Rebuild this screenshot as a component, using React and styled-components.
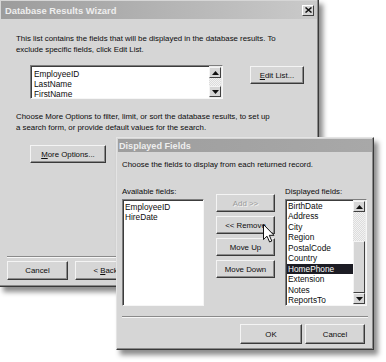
import React from 'react';
import styled, { createGlobalStyle } from 'styled-components';

const GlobalStyle = createGlobalStyle`
  html, body {
    margin: 0;
    padding: 0;
    background: #ffffff;
  }
  body {
    font-family: "Liberation Sans", Arial, sans-serif;
    font-size: 7.85px;
    color: #0c0c0c;
  }
`;

const Desktop = styled.div`
  position: relative;
  width: 386px;
  height: 362px;
  overflow: hidden;
  background: #fff;
`;

// windows sit on a free canvas, so they are placed by coordinates
const Window = styled.div`
  position: absolute;
  left: ${p => p.left}px;
  top: ${p => p.top}px;
  width: ${p => p.width}px;
  height: ${p => p.height}px;
  box-sizing: border-box;
  display: flex;
  flex-direction: column;
  background: #d6d6d6;
  border: 1px solid;
  border-color: #e4e4e4 #3a3a3a #3a3a3a #e4e4e4;
  box-shadow: inset -1px -1px #8a8a8a, 4px 5px 5px rgba(0, 0, 0, 0.45);
`;

const TitleBar = styled.div`
  height: ${p => p.h}px;
  flex: none;
  display: flex;
  align-items: center;
  justify-content: space-between;
  padding: 0 3px 0 ${p => p.pad}px;
  margin: 1px 1px 0 1px;
  background: linear-gradient(to right, ${p => p.from}, ${p => p.to});
  color: #eeeeee;
  font-weight: bold;
  font-size: ${p => p.fs}px;
`;

const CloseBox = styled.div`
  width: 12px;
  height: 11px;
  box-sizing: border-box;
  background: #d6d6d6;
  border: 1px solid;
  border-color: #fff #404040 #404040 #fff;
  display: flex;
  align-items: center;
  justify-content: center;
`;

const Body = styled.div`
  flex: 1;
  display: flex;
  flex-direction: column;
  padding: ${p => p.pad};
`;

const Para = styled.p`
  margin: ${p => p.m || 0};
  line-height: 11px;
  white-space: nowrap;
`;

const Row = styled.div`
  display: flex;
  align-items: flex-start;
  gap: ${p => p.gap || 0}px;
  margin: ${p => p.m || 0};
`;

const Button = styled.button`
  width: ${p => p.w}px;
  height: ${p => p.h || 18}px;
  flex: none;
  box-sizing: border-box;
  padding: 0;
  font-family: inherit;
  font-size: 7.85px;
  color: ${p => (p.disabled ? '#9a9a9a' : '#0c0c0c')};
  text-shadow: ${p => (p.disabled ? '1px 1px #f4f4f4' : 'none')};
  background: #d6d6d6;
  border: 1px solid;
  border-color: #f4f4f4 #3a3a3a #3a3a3a #f4f4f4;
  box-shadow: inset -1px -1px #8c8c8c;
  margin: ${p => p.m || 0};
`;

const Key = styled.span`
  text-decoration: underline;
`;

const ListBox = styled.div`
  width: ${p => p.w}px;
  height: ${p => p.h}px;
  box-sizing: border-box;
  flex: none;
  display: flex;
  background: #fff;
  border: 1px solid;
  border-color: #7e7e7e #f6f6f6 #f6f6f6 #7e7e7e;
  box-shadow: inset 1px 1px #3c3c3c;
  overflow: hidden;
  margin: ${p => p.m || 0};
`;

const Items = styled.div`
  flex: 1;
  padding: ${p => p.pad || '2px 0 0 2px'};
  line-height: ${p => p.lh}px;
  font-size: 8.3px;
  overflow: hidden;
`;

const Item = styled.div`
  white-space: nowrap;
  padding-left: 1px;
  background: ${p => (p.selected ? '#1c1c24' : 'transparent')};
  color: ${p => (p.selected ? '#fff' : '#0c0c0c')};
`;

const ScrollBar = styled.div`
  width: 12px;
  flex: none;
  display: flex;
  flex-direction: column;
  padding: 1px 1px 1px 0;
  background: #ececec;
`;

const ArrowBox = styled.div`
  height: 11px;
  flex: none;
  box-sizing: border-box;
  background: #d6d6d6;
  border: 1px solid;
  border-color: #f4f4f4 #404040 #404040 #f4f4f4;
  display: flex;
  align-items: center;
  justify-content: center;
`;

const Track = styled.div`
  flex: 1;
  display: flex;
  flex-direction: column;
  background: repeating-conic-gradient(#f2f2f2 0 25%, #dcdcdc 0 50%) 0 0 / 2px 2px;
`;

const Thumb = styled.div`
  margin-top: auto;
  height: ${p => p.h}px;
  box-sizing: border-box;
  background: #d6d6d6;
  border: 1px solid;
  border-color: #f4f4f4 #404040 #404040 #f4f4f4;
`;

const Column = styled.div`
  display: flex;
  flex-direction: column;
  width: ${p => p.w}px;
  margin: ${p => p.m || 0};
`;

const Label = styled.div`
  line-height: 11px;
  height: 11px;
  white-space: nowrap;
`;

const Footer = styled.div`
  margin-top: auto;
  display: flex;
  flex-direction: column;
`;

const Separator = styled.div`
  height: 0;
  border-top: 1px solid #8a8a8a;
  border-bottom: 1px solid #f6f6f6;
  margin: ${p => p.m || 0};
`;

const ButtonRow = styled.div`
  display: flex;
  gap: ${p => p.gap}px;
  justify-content: ${p => p.justify || 'flex-start'};
  margin: ${p => p.m || 0};
`;

const Pointer = styled.svg`
  position: absolute;
  left: ${p => p.x}px;
  top: ${p => p.y}px;
`;

const Arrow = ({ down }) => (
  <svg width="7" height="4" viewBox="0 0 7 4">
    <path d={down ? 'M0 0H7L3.5 4Z' : 'M0 4H7L3.5 0Z'} fill="#111" />
  </svg>
);

const Scroller = ({ thumb }) => (
  <ScrollBar>
    <ArrowBox><Arrow /></ArrowBox>
    <Track>{thumb ? <Thumb h={thumb} /> : null}</Track>
    <ArrowBox><Arrow down /></ArrowBox>
  </ScrollBar>
);

const displayed = [
  'BirthDate', 'Address', 'City', 'Region', 'PostalCode',
  'Country', 'HomePhone', 'Extension', 'Notes', 'ReportsTo',
];

export default function App() {
  return (
    <Desktop>
      <GlobalStyle />
      <Window left={-1} top={-1} width={320} height={288}>
        <TitleBar h={18} pad={4} fs={9.4} from="#9c9c9c" to="#cacaca">
          <span>Database Results Wizard</span>
          <CloseBox>
            <svg width="7" height="6" viewBox="0 0 7 6">
              <path d="M0.5 0.5L6.5 5.5M6.5 0.5L0.5 5.5" stroke="#111" strokeWidth="1.5" />
            </svg>
          </CloseBox>
        </TitleBar>
        <Body pad="14px 0 0 16px">
          <Para>
            This list contains the fields that will be displayed in the database results. To<br />
            exclude specific fields, click Edit List.
          </Para>
          <Row m="10px 0 0 14px">
            <ListBox w={193} h={34}>
              <Items lh={10} pad="3px 0 0 2px">
                <Item>EmployeeID</Item>
                <Item>LastName</Item>
                <Item>FirstName</Item>
              </Items>
              <Scroller />
            </ListBox>
            <Button w={54} h={18} m="1px 0 0 27px"><Key>E</Key>dit List...</Button>
          </Row>
          <Para m="12px 0 0 0">
            Choose More Options to filter, limit, or sort the database results, to set up<br />
            a search form, or provide default values for the search.
          </Para>
          <Row m="12px 0 0 14px">
            <Button w={76} h={18}><Key>M</Key>ore Options...</Button>
          </Row>
          <Footer>
            <Separator m="0 0 3px -9px" />
            <ButtonRow gap={7} m="0 0 6px -9px">
              <Button w={61} h={19}>Cancel</Button>
              <Button w={61} h={19}>&lt; <Key>B</Key>ack</Button>
            </ButtonRow>
          </Footer>
        </Body>
      </Window>

      <Window left={116} top={137} width={258} height={213}>
        <TitleBar h={13} pad={1} fs={9.1} from="#9e9e9e" to="#a8a8a8">
          <span>Displayed Fields</span>
        </TitleBar>
        <Body pad="7px 7px 0 5px">
          <Para>Choose the fields to display from each returned record.</Para>
          <Row m="16px 0 0 0">
            <Column w={82}>
              <Label>Available fields:</Label>
              <ListBox w={82} h={107} m="2px 0 0 0">
                <Items lh={10.4} pad="2px 0 0 1px">
                  <Item>EmployeeID</Item>
                  <Item>HireDate</Item>
                </Items>
              </ListBox>
            </Column>
            <Column w={59} m="8px 0 0 12px">
              <Button w={59} h={18} disabled>Add &gt;&gt;</Button>
              <Button w={59} h={18} m="4px 0 0 0">&lt;&lt; Remove</Button>
              <Button w={59} h={18} m="4px 0 0 0">Move Up</Button>
              <Button w={59} h={18} m="4px 0 0 0">Move Down</Button>
            </Column>
            <Column w={82} m="0 0 0 10px">
              <Label>Displayed fields:</Label>
              <ListBox w={82} h={107} m="2px 0 0 0">
                <Items lh={10.45} pad="1px 0 0 1px">
                  {displayed.map(name => (
                    <Item key={name} selected={name === 'HomePhone'}>{name}</Item>
                  ))}
                </Items>
                <Scroller thumb={52} />
              </ListBox>
            </Column>
          </Row>
          <Footer>
            <Separator m="0 -2px 6px 0" />
            <ButtonRow gap={3} justify="flex-end" m="0 1px 5px 0">
              <Button w={62} h={20}>OK</Button>
              <Button w={60} h={20}>Cancel</Button>
            </ButtonRow>
          </Footer>
        </Body>
      </Window>

      <Pointer x={263} y={224} width="12" height="19" viewBox="0 0 12 19">
        <path d="M0.5 0.5V15.5L4 12.2L6.6 18L8.8 17L6.3 11.3H11Z" fill="#fff" stroke="#111" strokeWidth="1" strokeLinejoin="round" />
      </Pointer>
    </Desktop>
  );
}
